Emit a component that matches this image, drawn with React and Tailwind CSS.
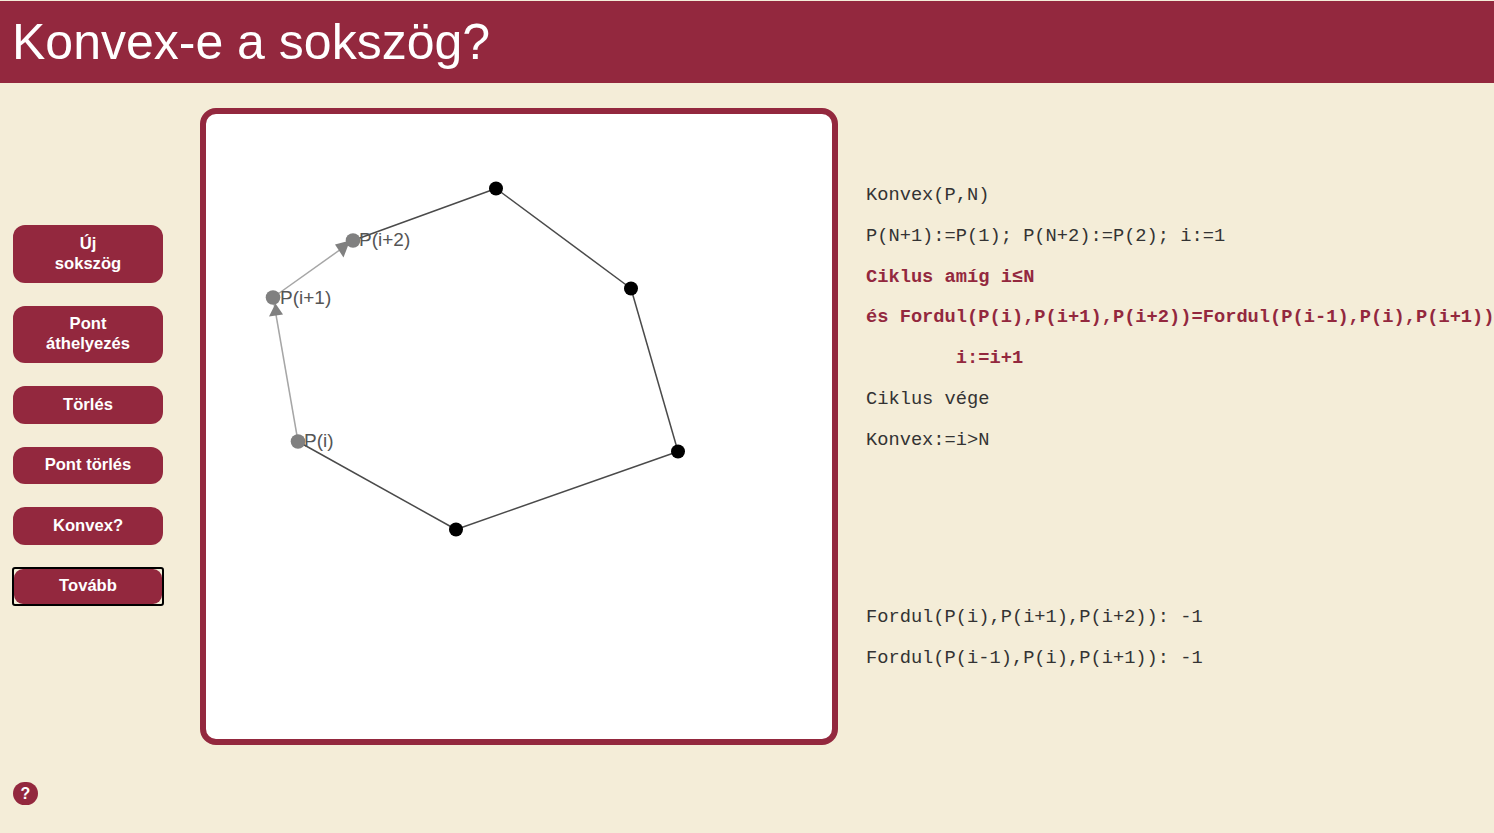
import React from 'react';

const sans = { fontFamily: '"Liberation Sans", Arial, sans-serif' };

const buttons = [
  { label: ['Új', 'sokszög'], h: 'h-[58px]', mb: 'mb-[23px]' },
  { label: ['Pont', 'áthelyezés'], h: 'h-[57px]', mb: 'mb-[23px]', shift: true },
  { label: ['Törlés'], h: 'h-[38px]', mb: 'mb-[23px]' },
  { label: ['Pont törlés'], h: 'h-[37px]', mb: 'mb-[23px]', shift: true },
  { label: ['Konvex?'], h: 'h-[38px]', mb: 'mb-[22px]' },
];

const outline = [
  [147, 126, 290, 74],
  [290, 74, 425, 174],
  [425, 174, 472, 337],
  [472, 337, 250, 415],
  [250, 415, 92, 327],
];

const codeTop = [
  { text: 'Konvex(P,N)' },
  { text: 'P(N+1):=P(1); P(N+2):=P(2); i:=1' },
  { text: 'Ciklus amíg i≤N', hot: true },
  { text: 'és Fordul(P(i),P(i+1),P(i+2))=Fordul(P(i-1),P(i),P(i+1))', hot: true },
  { text: '\ti:=i+1', hot: true },
  { text: 'Ciklus vége' },
  { text: 'Konvex:=i>N' },
];

const codeBottom = ['Fordul(P(i),P(i+1),P(i+2)): -1', 'Fordul(P(i-1),P(i),P(i+1)): -1'];

function CodeLine({ text, hot }) {
  return (
    <p
      className={`whitespace-pre [tab-size:8] text-[18.72px] leading-[21px] mb-[19.8px] ${hot ? 'font-bold text-[#93283e]' : 'text-[#333333]'}`}
    >
      {text}
    </p>
  );
}

export default function App() {
  return (
    <div className="min-h-screen h-[833px] overflow-hidden bg-[#f4edd8] pt-px" style={sans}>
      {/* Header */}
      <div className="h-[82px] bg-[#93283e] pl-[12px] flex items-center">
        <h1 className="text-[50px] leading-none text-white font-normal">Konvex-e a sokszög?</h1>
      </div>

      <div className="flex">
        {/* Buttons */}
        <div className="w-[200px] pl-[13px] pt-[142px] flex flex-col items-start">
          {buttons.map((b) => (
            <button
              key={b.label[0]}
              className={`w-[150px] ${b.h} ${b.mb} rounded-[12px] bg-[#93283e] text-white font-bold text-[16.6px] leading-[20px] ${b.shift ? 'pb-[2px]' : ''}`}
            >
              {b.label.map((l) => (
                <span key={l} className="block">{l}</span>
              ))}
            </button>
          ))}
          {/* focused button, the ring is square-cornered */}
          <div className="-ml-px w-[152px] h-[39px] rounded-[3px] border-2 border-black">
            <button className="w-full h-full pb-[2px] rounded-[9px] bg-[#93283e] text-white font-bold text-[16.6px] leading-[20px]">
              Tovább
            </button>
          </div>
          <button className="mt-[176px] w-[25px] h-[23px] rounded-[12px] bg-[#93283e] text-white font-bold text-[16px] leading-none">
            ?
          </button>
        </div>

        {/* Canvas */}
        <div className="mt-[25px] w-[638px] h-[637px] shrink-0 rounded-[16px] border-[6px] border-[#93283e] bg-white">
          <svg width="626" height="625" viewBox="0 -0.5 626 625">
            {outline.map(([x1, y1, x2, y2]) => (
              <line key={`${x1}-${y1}`} x1={x1} y1={y1} x2={x2} y2={y2} stroke="#4a4a4a" strokeWidth="1.5" />
            ))}
            <line x1="92" y1="327" x2="67" y2="183" stroke="#a6a6a6" strokeWidth="1.5" />
            <line x1="67" y1="183" x2="147" y2="126" stroke="#a6a6a6" strokeWidth="1.5" />
            <polygon points="69.5,189 63,202 77,200" fill="#808080" />
            <polygon points="144,126 129,130 137.5,143" fill="#808080" />
            {[[290, 74], [425, 174], [472, 337], [250, 415]].map(([cx, cy]) => (
              <circle key={cx} cx={cx} cy={cy} r="7" fill="#000000" />
            ))}
            {[[92, 327], [67, 183], [147, 126]].map(([cx, cy]) => (
              <circle key={cx} cx={cx} cy={cy} r="7.3" fill="#808080" />
            ))}
            <text x="98" y="332" fontSize="19" fill="#555555">P(i)</text>
            <text x="74" y="189" fontSize="19" fill="#555555">P(i+1)</text>
            <text x="153" y="131" fontSize="19" fill="#555555">P(i+2)</text>
          </svg>
        </div>

        {/* Algorithm */}
        <div className="ml-[28px] pt-[102px] w-[628px] shrink-0" style={{ fontFamily: '"Liberation Mono", "Courier New", monospace' }}>
          {codeTop.map((line) => (
            <CodeLine key={line.text} text={line.text} hot={line.hot} />
          ))}
          <div className="mt-[156px]">
            {codeBottom.map((t) => (
              <CodeLine key={t} text={t} />
            ))}
          </div>
        </div>
      </div>
    </div>
  );
}
